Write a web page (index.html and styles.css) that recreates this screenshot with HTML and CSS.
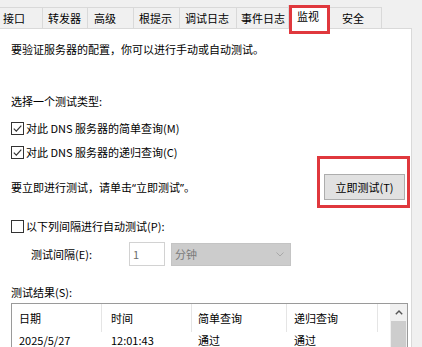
FILE: index.html
```html
<!DOCTYPE html>
<html lang="zh-CN">
<head>
<meta charset="utf-8">
<title>监视</title>
<link rel="stylesheet" href="styles.css">
</head>
<body>
<div class="tabs">
  <div class="tab t1">接口</div>
  <div class="tab t2">转发器</div>
  <div class="tab t3">高级</div>
  <div class="tab t4">根提示</div>
  <div class="tab t5">调试日志</div>
  <div class="tab t6">事件日志</div>
  <div class="tab selected">监视<span class="mark mark-tab"></span></div>
  <div class="tab t8">安全</div>
</div>
<div class="panel">
  <p class="line intro">要验证服务器的配置，你可以进行手动或自动测试。</p>
  <p class="line section">选择一个测试类型:</p>
  <div class="check-row cb1"><span class="box"><svg viewBox="0 0 11 11" width="11" height="11"><path d="M1.8 5.6 L4.3 8.1 L9.3 2.6" fill="none" stroke="#333" stroke-width="1.2"/></svg></span><span>对此 DNS 服务器的简单查询(M)</span></div>
  <div class="check-row cb2"><span class="box"><svg viewBox="0 0 11 11" width="11" height="11"><path d="M1.8 5.6 L4.3 8.1 L9.3 2.6" fill="none" stroke="#333" stroke-width="1.2"/></svg></span><span>对此 DNS 服务器的递归查询(C)</span></div>
  <div class="run-row">
    <span class="line">要立即进行测试，请单击<span class="q">“</span>立即测试<span class="q">”</span>。</span>
    <div class="btn-wrap"><div class="btn">立即测试(T)</div><span class="mark mark-btn"></span></div>
  </div>
  <div class="check-row cb3"><span class="box"></span><span>以下列间隔进行自动测试(P):</span></div>
  <div class="interval-row">
    <span class="interval-label">测试间隔(E):</span>
    <div class="input">1</div>
    <div class="select"><span>分钟</span><svg viewBox="0 0 8 5" width="8" height="5"><path d="M0.5 0.5 L4 4 L7.5 0.5" fill="none" stroke="#a8a8a8" stroke-width="1"/></svg></div>
  </div>
  <p class="line results-label">测试结果(S):</p>
  <div class="list">
    <div class="list-body">
      <div class="list-head">
        <span class="cell c1">日期</span><span class="cell c2">时间</span><span class="cell c3">简单查询</span><span class="cell c4">递归查询</span><span class="cell c5"></span>
      </div>
      <div class="list-row">
        <span class="cell c1">2025/5/27</span><span class="cell c2">12:01:43</span><span class="cell c3">通过</span><span class="cell c4">通过</span>
      </div>
    </div>
    <div class="scrollbar">
      <div class="sb-up"><svg viewBox="0 0 8 5" width="8" height="5"><path d="M0.8 4.3 L4 1.1 L7.2 4.3" fill="none" stroke="#555" stroke-width="1.4"/></svg></div>
      <div class="sb-thumb"></div>
    </div>
  </div>
</div>
</body>
</html>
```
FILE: styles.css
```css
* { box-sizing: border-box; }
html, body { margin: 0; padding: 0; }
body {
  width: 422px;
  height: 347px;
  overflow: hidden;
  background: #f0f0f0;
  font-family: "Noto Sans CJK SC", sans-serif;
  font-size: 11px;
  color: #000;
}

/* tabs */
.tabs {
  display: flex;
  align-items: flex-end;
  height: 29px;
  margin-left: -3px;
  margin-bottom: -1px;
  position: relative;
  z-index: 1;
}
.tab {
  height: 22px;
  border: 1px solid #d9d9d9;
  border-left: 0;
  background: #f0f0f0;
  display: flex;
  align-items: center;
  line-height: 16px;
  white-space: nowrap;
}
.t1 { width: 46px; padding-left: 6px; }
.t2 { width: 45px; padding-left: 5px; }
.t3 { width: 46px; padding-left: 6px; }
.t4 { width: 46px; padding-left: 5px; }
.t5 { width: 57px; padding-left: 5px; }
.t6 { width: 52px; padding-left: 4px; }
.t8 { width: 52px; padding-left: 12px; }
.tab.selected {
  position: relative;
  width: 42px;
  height: 24px;
  padding-left: 8px;
  padding-bottom: 4px;
  border-left: 1px solid #d9d9d9;
  border-bottom: 0;
  background: #fff;
  margin-left: -1px;
}
.mark {
  position: absolute;
  border: 3px solid #e0383d;
  pointer-events: none;
}
.mark-tab {
  left: 0;
  top: -1px;
  width: 41px;
  height: 29px;
}

/* panel */
.panel {
  background: #fff;
  border: 1px solid #d9d9d9;
  border-bottom: 0;
  margin-left: -1px;
  width: 413px;
  height: 319px;
  padding: 12px 0 0 11px;
}
.line { margin: 0; line-height: 16px; white-space: nowrap; }
.q { font-family: "Noto Sans", sans-serif; }
.section { margin-top: 36px; }

.check-row {
  display: flex;
  align-items: center;
  gap: 2px;
  height: 16px;
  line-height: 16px;
  white-space: nowrap;
}
.cb1 { margin-top: 11px; }
.cb2 { margin-top: 8px; }
.cb3 { margin-top: 18px; }
.box {
  width: 13px;
  height: 13px;
  border: 1px solid #333;
  background: #fff;
  display: flex;
}

.run-row {
  display: flex;
  justify-content: space-between;
  align-items: center;
  margin-top: 14px;
  padding-right: 6px;
}
.btn-wrap { position: relative; }
.btn {
  width: 81px;
  height: 26px;
  background: #e1e1e1;
  border: 1px solid #adadad;
  display: flex;
  align-items: center;
  justify-content: center;
  line-height: 16px;
}
.mark-btn {
  left: -7px;
  top: -18px;
  width: 93px;
  height: 52px;
}

.interval-row {
  display: flex;
  align-items: center;
  margin-top: 8px;
  height: 24px;
}
.interval-label { margin-left: 20px; width: 98px; line-height: 16px; }
.input {
  width: 36px;
  height: 24px;
  border: 1px solid #d2d2d2;
  background: #fff;
  color: #6d6d6d;
  padding-left: 3px;
  display: flex;
  align-items: center;
}
.select {
  margin-left: 6px;
  width: 120px;
  height: 23px;
  background: #cccccc;
  border: 1px solid #c4c4c4;
  color: #7a7a7a;
  padding: 0 6px 0 3px;
  display: flex;
  align-items: center;
  justify-content: space-between;
}

.results-label { margin-top: 18px; }

.list {
  margin-top: 3px;
  width: 397px;
  height: 44px;
  border: 1px solid #9a9a9a;
  border-bottom: 0;
  background: #fff;
  display: flex;
}
.list-body { flex: 1; }
.list-head, .list-row { display: flex; }
.list-head { height: 28px; align-items: center; }
.list-row { height: 14px; margin-top: 1px; align-items: center; }
.cell { line-height: 14px; white-space: nowrap; }
.list-head .cell { height: 28px; display: flex; align-items: center; border-right: 1px solid #e5e5e5; }
.list-head .c5 { border-right: 0; flex: 1; }
.c1 { width: 90px; padding-left: 7px; }
.c2 { width: 90px; padding-left: 9px; }
.c3 { width: 95px; padding-left: 6px; }
.c4 { width: 91px; padding-left: 7px; }

.scrollbar {
  width: 17px;
  background: #f0f0f0;
  display: flex;
  flex-direction: column;
}
.sb-up {
  height: 17px;
  display: flex;
  align-items: center;
  justify-content: center;
}
.sb-thumb {
  flex: 1;
  margin: 0 1px;
  background: #cdcdcd;
}
```
